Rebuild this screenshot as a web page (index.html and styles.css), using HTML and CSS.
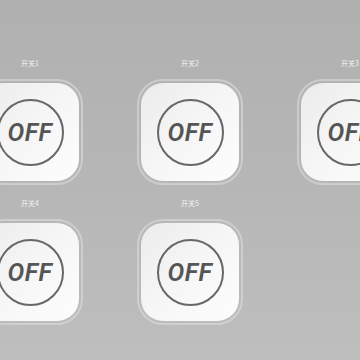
FILE: index.html
```html
<!DOCTYPE html>
<html lang="zh">
<head>
<meta charset="utf-8">
<link rel="stylesheet" href="styles.css">
</head>
<body>
<div class="grid">
  <div class="cell"><div class="label">开关1</div><div class="ring"><div class="btn"><div class="circle">OFF</div></div></div></div>
  <div class="cell"><div class="label">开关2</div><div class="ring"><div class="btn"><div class="circle">OFF</div></div></div></div>
  <div class="cell"><div class="label">开关3</div><div class="ring"><div class="btn"><div class="circle">OFF</div></div></div></div>
  <div class="cell"><div class="label">开关4</div><div class="ring"><div class="btn"><div class="circle">OFF</div></div></div></div>
  <div class="cell"><div class="label">开关5</div><div class="ring"><div class="btn"><div class="circle">OFF</div></div></div></div>
</div>
</body>
</html>
```
FILE: styles.css
```css
html, body {
  margin: 0;
  padding: 0;
  width: 360px;
  height: 360px;
  overflow: hidden;
}
body {
  background: linear-gradient(to bottom, #b0b0b0 0%, #b6b6b6 50%, #bebebe 100%);
  font-family: "Noto Sans CJK SC", "Noto Sans", sans-serif;
}
.grid {
  display: grid;
  grid-template-columns: repeat(3, 160px);
  row-gap: 13px;
  margin-left: -50px;
  padding-top: 58px;
}
.cell {
  display: flex;
  flex-direction: column;
  align-items: center;
}
.label {
  font-size: 7px;
  line-height: 10px;
  height: 10px;
  color: #f2f2f2;
}
.ring {
  margin-top: 11px;
  padding: 2px;
  border: 2px solid rgba(215, 215, 215, 0.7);
  border-radius: 26px;
}
.btn {
  width: 98px;
  height: 98px;
  border-radius: 22px;
  background: linear-gradient(135deg, #ececec 0%, #f6f6f6 50%, #fdfdfd 100%);
  display: flex;
  align-items: center;
  justify-content: center;
}
.circle {
  width: 63px;
  height: 63px;
  border: 2px solid #676767;
  border-radius: 50%;
  display: flex;
  align-items: center;
  justify-content: center;
  font-family: Roboto, "Liberation Sans", sans-serif;
  font-weight: 600;
  font-style: italic;
  font-size: 25px;
  color: #555555;
  letter-spacing: 0.5px;
}
```
